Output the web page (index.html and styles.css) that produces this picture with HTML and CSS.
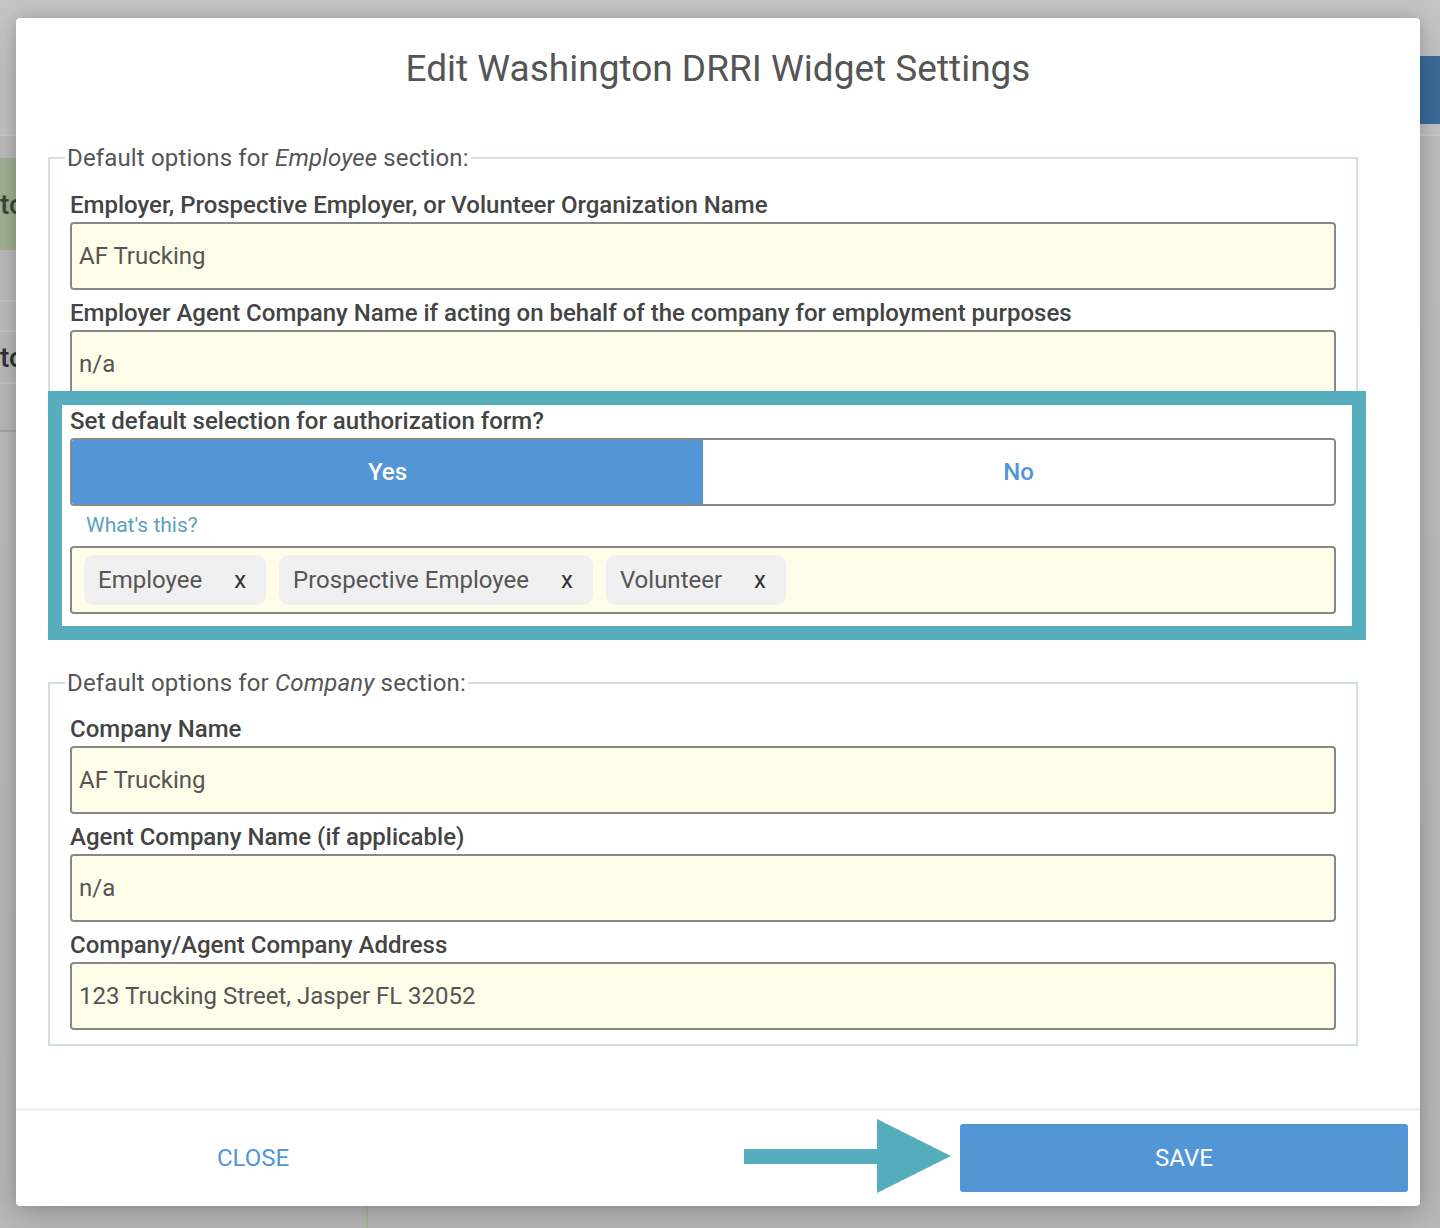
FILE: index.html
```html
<!DOCTYPE html>
<html lang="en">
<head>
<meta charset="utf-8">
<title>Edit Washington DRRI Widget Settings</title>
<link rel="stylesheet" href="styles.css">
</head>
<body>
<div class="page">
  <div class="topbar"><div class="cta"></div></div>
  <div class="content">
    <div class="left-col">
      <div class="card-green"><span class="bg-text">to</span></div>
      <div class="row row-a"></div>
      <div class="row row-b"><span class="bg-text dark">to</span></div>
      <div class="row row-c"></div>
    </div>
  </div>
</div>

<div class="overlay">
  <div class="modal">
    <div class="modal-body">
      <h1 class="title">Edit Washington DRRI Widget Settings</h1>

      <fieldset class="group">
        <legend>Default options for <em>Employee</em> section:</legend>
        <div class="field">
          <div class="label">Employer, Prospective Employer, or Volunteer Organization Name</div>
          <div class="input">AF Trucking</div>
        </div>
        <div class="field">
          <div class="label">Employer Agent Company Name if acting on behalf of the company for employment purposes</div>
          <div class="input">n/a</div>
        </div>
        <div class="field auth-group">
          <div class="label">Set default selection for authorization form?</div>
          <div class="toggle">
            <div class="opt opt-on">Yes</div>
            <div class="opt opt-off">No</div>
          </div>
          <div class="whats">What's this?</div>
          <div class="tags">
            <div class="chip"><span>Employee</span><span class="x">x</span></div>
            <div class="chip"><span>Prospective Employee</span><span class="x">x</span></div>
            <div class="chip"><span>Volunteer</span><span class="x">x</span></div>
          </div>
        </div>
      </fieldset>

      <fieldset class="group group-2">
        <legend>Default options for <em>Company</em> section:</legend>
        <div class="field">
          <div class="label">Company Name</div>
          <div class="input">AF Trucking</div>
        </div>
        <div class="field">
          <div class="label">Agent Company Name (if applicable)</div>
          <div class="input">n/a</div>
        </div>
        <div class="field">
          <div class="label">Company/Agent Company Address</div>
          <div class="input">123 Trucking Street, Jasper FL 32052</div>
        </div>
      </fieldset>
    </div>

    <div class="modal-footer">
      <div class="btn btn-close">Close</div>
      <svg class="arrow" width="207" height="74" viewBox="0 0 207 74" aria-hidden="true">
        <rect x="0" y="30" width="134" height="15" fill="#55adbd"/>
        <polygon points="133,0 207,37 133,74" fill="#55adbd"/>
      </svg>
      <div class="btn btn-save">Save</div>
    </div>
  </div>
</div>
</body>
</html>
```

FILE: styles.css
```css
html, body {
  margin: 0;
  padding: 0;
}

body {
  width: 1440px;
  height: 1228px;
  overflow: hidden;
  position: relative;
  font-family: Roboto, "Noto Sans", "Liberation Sans", sans-serif;
  background: #bdbdbd;
}

/* ---------- dimmed page behind the dialog ---------- */
.page {
  height: 1228px;
  background: linear-gradient(180deg, #c2c2c2 0%, #bababa 100%);
}

.topbar {
  height: 134px;
  background: #c6c6c6;
  border-bottom: 2px solid #cfcfcf;
  display: flex;
  justify-content: flex-end;
  align-items: flex-start;
}

.cta {
  margin-top: 56px;
  width: 40px;
  height: 68px;
  background: #3e6d9c;
}

.content {
  display: flex;
  height: 1092px;
}

.left-col {
  width: 366px;
  border-right: 2px solid #a9b99d;
  display: flex;
  flex-direction: column;
}

.card-green {
  margin-top: 22px;
  height: 92px;
  background: #a3b695;
  display: flex;
  align-items: center;
}

.bg-text {
  margin-left: 0;
  font-size: 28px;
  font-weight: 500;
  color: #3c4a37;
}

.bg-text.dark {
  color: #333;
}

.row-a {
  margin-top: 50px;
  height: 28px;
  border-top: 2px solid #cbcbcb;
  background: #c0c0c0;
}

.row-b {
  height: 50px;
  border-top: 2px solid #cbcbcb;
  border-bottom: 2px solid #cbcbcb;
  background: #bebebe;
  display: flex;
  align-items: center;
}

.row-c {
  height: 46px;
  background: #bdbdbd;
  border-bottom: 2px solid #a8a8a8;
}

/* ---------- dialog ---------- */
.overlay {
  position: absolute;
  inset: 0;
  padding: 18px 20px 22px 16px;
  box-sizing: border-box;
  display: flex;
}

.modal {
  flex: 1;
  background: #fff;
  border-radius: 4px;
  box-shadow: 0 8px 40px rgba(0, 0, 0, 0.22), 0 0 12px rgba(0, 0, 0, 0.12);
  display: flex;
  flex-direction: column;
}

.modal-body {
  flex: 1;
  padding: 30px 32px 0 32px;
}

.title {
  margin: 0;
  font-size: 37px;
  line-height: 42px;
  font-weight: 400;
  color: #555;
  text-align: center;
}

.group {
  margin: 55px 30px 0 0;
  padding: 21px 20px 14px 20px;
  border: 2px solid #d4e0dd;
}

.group-2 {
  margin-top: 40px;
  padding-top: 20px;
}

.group legend {
  margin-left: -5px;
  padding: 0 2px;
  font-size: 24px;
  line-height: 26px;
  color: #555;
  letter-spacing: 0.15px;
}

.group legend em {
  font-style: italic;
}

.field + .field {
  margin-top: 10px;
}

.label {
  font-size: 24px;
  line-height: 26px;
  font-weight: 500;
  color: #444;
  margin-bottom: 4px;
}

.input {
  height: 68px;
  box-sizing: border-box;
  border: 2px solid #888;
  border-radius: 4px;
  background: #fdfde9;
  padding: 0 7px;
  display: flex;
  align-items: center;
  font-size: 24px;
  color: #555;
}

/* highlighted group */
.auth-group {
  position: relative;
  margin-top: 9px;
}

.auth-group::before {
  content: "";
  position: absolute;
  left: -22px;
  right: -30px;
  top: -17px;
  bottom: -26px;
  border: 14px solid #55adbd;
  pointer-events: none;
}

.toggle {
  height: 68px;
  box-sizing: border-box;
  border: 2px solid #888;
  border-radius: 4px;
  overflow: hidden;
  display: flex;
}

.opt {
  flex: 1;
  display: flex;
  align-items: center;
  justify-content: center;
  font-size: 24px;
  font-weight: 500;
}

.opt-on {
  background: #5296d5;
  color: #fff;
}

.opt-off {
  background: #fff;
  color: #5296d5;
}

.whats {
  margin: 6px 0 8px 16px;
  font-size: 21px;
  line-height: 26px;
  color: #5a9fc0;
}

.tags {
  height: 68px;
  box-sizing: border-box;
  border: 2px solid #888;
  border-radius: 4px;
  background: #fdfde9;
  padding: 0 12px;
  display: flex;
  align-items: center;
  gap: 13px;
}

.chip {
  height: 50px;
  box-sizing: border-box;
  background: #f0f0f0;
  border-radius: 10px;
  padding: 0 20px 0 14px;
  display: flex;
  align-items: center;
  gap: 32px;
  font-size: 24px;
  color: #555;
}

.chip .x {
  color: #333;
}

/* footer */
.modal-footer {
  position: relative;
  border-top: 3px solid #eef2f1;
  padding: 13px 12px 14px 13px;
  display: flex;
  justify-content: space-between;
}

.btn {
  width: 448px;
  height: 68px;
  display: flex;
  align-items: center;
  justify-content: center;
  font-size: 24px;
  text-transform: uppercase;
  border-radius: 3px;
}

.btn-close {
  color: #5296d5;
}

.btn-save {
  background: #5296d5;
  color: #fff;
}

.arrow {
  position: absolute;
  left: 728px;
  top: 8px;
}
```
